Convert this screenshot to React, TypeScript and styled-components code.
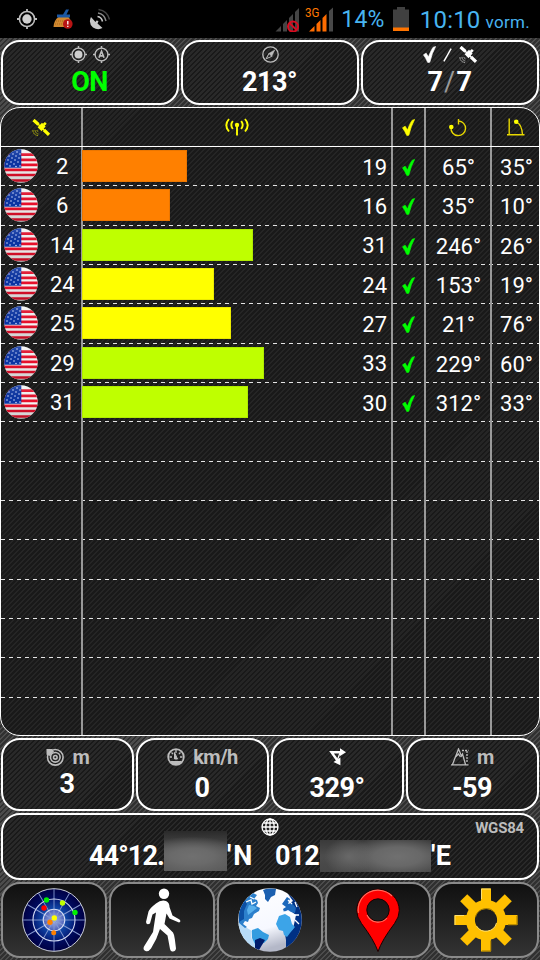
import { ReactNode } from 'react';
import styled, { createGlobalStyle } from 'styled-components';

type Satellite = {
    id: number;
    signal: number;
    azimuth: number;
    elevation: number;
}

const satellites: Satellite[] = [
    { id: 2, signal: 19, azimuth: 65, elevation: 35 },
    { id: 6, signal: 16, azimuth: 35, elevation: 10 },
    { id: 14, signal: 31, azimuth: 246, elevation: 26 },
    { id: 24, signal: 24, azimuth: 153, elevation: 19 },
    { id: 25, signal: 27, azimuth: 21, elevation: 76 },
    { id: 29, signal: 33, azimuth: 229, elevation: 60 },
    { id: 31, signal: 30, azimuth: 312, elevation: 33 },
];

const ROW_COUNT = 15;
const PX_PER_DB = 5.52;

const signalColor = (signal: number) => {
    if (signal < 20) return '#ff8000';
    if (signal < 30) return '#ffff00';
    return '#bfff00';
}

const GlobalStyle = createGlobalStyle`
    * {
        box-sizing: border-box;
    }

    body {
        margin: 0;
        background: #000;
        font-family: Roboto, "Liberation Sans", sans-serif;
        color: #fff;
    }

    svg {
        display: block;
        flex: none;
    }
`;

const Screen = styled.div`
    width: 540px;
    height: 960px;
    display: flex;
    flex-direction: column;
    overflow: hidden;
    background: repeating-linear-gradient(135deg, #303030 0 2px, #4c4c4c 2px 3.54px);
`;

const StatusBar = styled.header`
    height: 38px;
    flex: none;
    display: flex;
    align-items: center;
    padding: 1px 10px 0 17px;
    background: #000;
    color: #48b4f0;
`;

const StatusIcons = styled.div`
    display: flex;
    align-items: center;
    gap: 16px;
    margin-right: auto;
    padding-bottom: 1px;
`;

const Signals = styled.div`
    display: flex;
    gap: 5px;
    margin-bottom: 2px;
`;

const StatusText = styled.span<{ $size: number; $left: number; $top?: number; $spacing?: number }>`
    font-size: ${({ $size }) => $size}px;
    line-height: 26px;
    padding-top: ${({ $top }) => $top ?? 1}px;
    margin-left: ${({ $left }) => $left}px;
    letter-spacing: ${({ $spacing }) => $spacing ?? 0}px;
    white-space: nowrap;
`;

const Content = styled.main`
    flex: 1;
    min-height: 0;
    display: flex;
    flex-direction: column;
    gap: 2px;
    padding: 2px 0;
`;

const PanelRow = styled.div<{ $height: number }>`
    height: ${({ $height }) => $height}px;
    flex: none;
    display: flex;
    gap: 2px;
    padding: 0 1px;
`;

const Panel = styled.section<{ $top: number; $gap?: number }>`
    flex: 1 1 0;
    min-width: 0;
    display: flex;
    flex-direction: column;
    align-items: center;
    gap: ${({ $gap }) => $gap ?? 0}px;
    padding-top: ${({ $top }) => $top}px;
    border: 2px solid #fff;
    border-radius: 19px;
    background: repeating-linear-gradient(135deg, #191919 0 2px, #292929 2px 3.54px);
`;

const PanelHead = styled.div<{ $height: number; $gap?: number }>`
    height: ${({ $height }) => $height}px;
    display: flex;
    align-items: center;
    gap: ${({ $gap }) => $gap ?? 8}px;
    color: #bdbdbd;
    font-size: 20px;
    line-height: 20px;
    font-weight: 700;
    letter-spacing: -0.5px;
`;

const Value = styled.div<{ $color?: string }>`
    font-size: 27px;
    line-height: 28px;
    font-weight: 700;
    letter-spacing: -0.5px;
    padding-right: 1px;
    white-space: nowrap;
    color: ${({ $color }) => $color ?? '#fff'};
`;

const Muted = styled.span`
    color: #9a9a9a;
    font-weight: 400;
    margin: 0 2px 0 1.5px;
`;

const Table = styled.section`
    height: 629px;
    flex: none;
    overflow: hidden;
    border: 1px solid #fff;
    border-radius: 20px;
    background: repeating-linear-gradient(135deg, #191919 0 2px, #252525 2px 3.54px);
`;

const Row = styled.div`
    display: grid;
    grid-template-columns: 82px 310px 33px 66px 47px;
    height: 39.33px;
    background: repeating-linear-gradient(90deg, #e4e4e4 0 4.5px, transparent 4.5px 8px) 0 100% / 100% 1px no-repeat;
`;

const HeadRow = styled(Row)`
    height: 39px;
    border-bottom: 1px solid #fff;
    background: none;
`;

const Cell = styled.div`
    display: flex;
    align-items: center;
    justify-content: center;
    min-width: 0;
    font-size: 22px;
    line-height: 24px;
    padding: 3px 0 0 1px;
    border-right: 2px solid #999;

    &:last-child {
        border-right: none;
        padding-left: 2px;
    }
`;

const HeadCell = styled(Cell)`
    padding: 0 1px 0 0;

    &:last-child {
        padding-left: 1px;
    }
`;

const CheckCell = styled(Cell)`
    padding: 2px 1px 0 0;
`;

const SatCell = styled(Cell)`
    justify-content: flex-start;
    padding: 0 0 1px 2.5px;
`;

const SatNumber = styled.span`
    flex: 1;
    text-align: center;
    padding: 2px 0 0 6px;
`;

const SignalCell = styled(Cell)`
    justify-content: space-between;
    padding: 0 4px 0 0;
    margin-left: -1px;
`;

const SignalNumber = styled.span`
    padding-top: 2px;
`;

const Bar = styled.div`
    height: 32px;
    margin-bottom: 1.4px;
    box-shadow: inset 0 0 0 1px rgba(0, 0, 0, 0.08);
`;

const Coordinates = styled.div`
    width: 100%;
    display: flex;
    align-items: flex-start;
    padding-left: 86px;
`;

const Redacted = styled.span<{ $width: number; $height: number; $shift: number }>`
    width: ${({ $width }) => $width}px;
    height: ${({ $height }) => $height}px;
    flex: none;
    margin-top: ${({ $shift }) => $shift}px;
`;

const ShortRedacted = styled(Redacted)`
    background:
        radial-gradient(ellipse 85% 50% at 45% 64%, #707070 0, #6a6a6a 40%, transparent 100%),
        linear-gradient(#2a2a2a, #505050 50%, #585858);
`;

const LongRedacted = styled(Redacted)`
    background:
        radial-gradient(ellipse 22% 60% at 26% 52%, #686868 0, transparent 100%),
        radial-gradient(ellipse 48% 65% at 70% 52%, #707070 0, #686868 45%, transparent 100%),
        linear-gradient(#3a3a3a, #4c4c4c 50%, #464646);
`;

const CoordText = styled(Value)<{ $width: number; $spacing?: number }>`
    width: ${({ $width }) => $width}px;
    flex: none;
    margin-top: 6px;
    padding: 0;
    letter-spacing: ${({ $spacing }) => $spacing ?? -0.9}px;
`;

const CoordHead = styled.div`
    width: 100%;
    height: 18px;
    display: grid;
    grid-template-columns: 1fr 18px 1fr;
`;

const Datum = styled.span`
    grid-column: 3;
    justify-self: end;
    padding: 1px 13px 0 0;
    font-size: 15px;
    line-height: 19px;
    font-weight: 700;
    color: #bdbdbd;
    letter-spacing: -0.2px;
`;

const NavButton = styled.button`
    flex: 1 1 0;
    min-width: 0;
    display: flex;
    align-items: center;
    justify-content: center;
    padding: 0 0 1px;
    border: 2px solid #8a8a8a;
    border-radius: 19px;
    background: linear-gradient(#101010, #333);
`;

const Gps = ({ size = 17, children }: { size?: number; children?: ReactNode }) => (
    <svg width={size} height={size} viewBox="0 0 18 18" fill="none" stroke="#bdbdbd">
        <circle cx="9" cy="9" r="6.8" strokeWidth="1.4" />
        <path d="M9 0v2.5M9 15.5V18M0 9h2.5M15.5 9H18" strokeWidth="1.6" />
        {children ?? <circle cx="9" cy="9" r="4.2" fill="#cfcfcf" stroke="none" />}
    </svg>
);

const Check = ({ color }: { color: string }) => (
    <svg width="13" height="17" viewBox="0 0 13 17" fill={color} stroke={color} strokeWidth=".7" strokeLinejoin="round">
        <path d="M.5 8.8 3.2 7.2 5.4 11Q8 4.2 10 1.4L12.6.5Q9 7 6.8 16.2L4.8 16.5Q2.8 12 .5 8.8Z" />
    </svg>
);

const SatelliteIcon = ({ color }: { color: string }) => (
    <svg width="18" height="17" viewBox="0 0 18 17" fill="none" stroke={color}>
        <path d="M1.5 1 6.5 5.5M12 11l5 4.8" strokeWidth="3.2" />
        <path d="M6 5l7 7" strokeWidth="1.6" />
        <path d="M10 3.8 13.6 7.4 9.6 12.2 5.6 8.2Z" fill={color} stroke="none" />
        <path d="M11.6 6 13.8 3.8" strokeWidth="2.6" />
        <path d="M5 11.2q.2 1.4 1.6 1.8M3 11.2q.2 3 3.3 3.8M.9 11.2q.2 4.7 5 5.3" strokeWidth=".9" strokeDasharray="1.5 .7" opacity=".8" />
    </svg>
);

const AntennaIcon = () => (
    <svg width="24" height="18" viewBox="0 0 24 18" fill="none" stroke="#ffff00" strokeWidth="1.9">
        <circle cx="12" cy="7" r="2.2" fill="#ffff00" stroke="none" />
        <path d="M12 8v9.5" />
        <path d="M7.8 3q-3 4 0 8M16.200 3q3 4 0 8M4 1q-5.400 6.200 0 12.500M20 1q5.400 6.200 0 12.500" />
    </svg>
);

const AzimuthIcon = () => (
    <svg width="18" height="19" viewBox="0 0 18 19" fill="none" stroke="#e8d800" strokeWidth="1.4">
        <path d="M9.5 6.5V1M9.5 3A7.3 7.3 0 1 1 2 9.5" />
        <circle cx="2.3" cy="9" r="2.3" fill="#ffff00" stroke="none" />
    </svg>
);

const ElevationIcon = () => (
    <svg width="18" height="18" viewBox="0 0 18 18" fill="none" stroke="#e8d800" strokeWidth="1.4">
        <path d="M2.2.5v16.2M0 16.7h17.5M9.5 4q5.5 3 6 12.5" />
        <circle cx="9.2" cy="3.8" r="2.3" fill="#ffff00" stroke="none" />
    </svg>
);

const stars = [
    [5, 7], [9, 5], [13, 3], [4, 11], [8, 9], [12, 7], [16, 5], [3, 15],
    [7, 13], [11, 11], [15, 9], [6, 17], [10, 15], [14, 13], [16, 17], [12, 17.5],
];

const Flag = () => (
    <svg width="34" height="34" viewBox="0 0 34 34">
        <defs>
            <clipPath id="flag-clip"><circle cx="17" cy="17" r="16.7" /></clipPath>
            <linearGradient id="flag-shade" x2="0" y2="1">
                <stop offset="0" stopColor="#fff" stopOpacity=".15" />
                <stop offset=".5" stopColor="#000" stopOpacity="0" />
                <stop offset="1" stopColor="#000" stopOpacity=".2" />
            </linearGradient>
        </defs>
        <g clipPath="url(#flag-clip)">
            <path fill="#f8f8f8" d="M0 0h34v34H0z" />
            <path stroke="#e8102c" strokeWidth="2.7" d="M0 5.600h34M0 10.800h34M0 15.800h34M0 20.800h34M0 26h34M0 31.500h34" />
            <path fill="#0a34a4" d="M0 0h17.3v18.7H0z" />
            {stars.map(([x, y]) => <circle key={`${x}-${y}`} cx={x} cy={y} r=".8" fill="#cdd8ff" />)}
            <path fill="url(#flag-shade)" d="M0 0h34v34H0z" />
        </g>
    </svg>
);

const RadarIcon = () => (
    <svg width="64" height="64" viewBox="0 0 64 64">
        <defs>
            <radialGradient id="radar">
                <stop offset="0" stopColor="#fff" />
                <stop offset=".12" stopColor="#8c9ad8" />
                <stop offset=".33" stopColor="#4c62ba" />
                <stop offset=".36" stopColor="#1048a8" />
                <stop offset=".64" stopColor="#06207c" />
                <stop offset=".68" stopColor="#000c60" />
                <stop offset="1" stopColor="#000044" />
            </radialGradient>
        </defs>
        <circle cx="32" cy="32" r="31.3" fill="url(#radar)" stroke="#c8ccd8" strokeWidth="1" />
        <g stroke="#8498d0" strokeWidth=".9">
            {[0, 30, 60, 90, 120, 150].map(a => <path key={a} d="M32 1v62" transform={`rotate(${a} 32 32)`} />)}
        </g>
        <g fill="none" stroke="#d4dcf4" strokeWidth="1.1">
            <circle cx="32" cy="32" r="21" />
            <circle cx="32" cy="32" r="10.8" />
        </g>
        <circle cx="24.5" cy="12" r="2.7" fill="#00f000" />
        <circle cx="40.5" cy="15" r="2.7" fill="#c0ff00" />
        <circle cx="22" cy="20" r="2.7" fill="#f00" />
        <circle cx="53" cy="24.5" r="2.7" fill="#00f000" />
        <circle cx="32.3" cy="30" r="2.7" fill="#ff0" />
        <circle cx="28" cy="34.3" r="2.7" fill="#ff8000" />
        <circle cx="31.7" cy="44.8" r="2.5" fill="#ff8000" />
    </svg>
);

const WalkIcon = () => (
    <svg width="64" height="64" viewBox="0 0 64 64" fill="#fff">
        <circle cx="34" cy="5.8" r="5.2" />
        <path d="M26 15.5Q31 11.5 36 13Q39.5 14.5 39.5 19L42.5 27.5 49.5 31.5Q51.5 33.5 49 34.5L39.5 30.5 36.5 25.5 34.5 36 43 44.5Q44.5 47 44.8 51L46 60.5Q45.5 64 42 63.5Q40.5 63 40 61L37.5 47.5 30 41Q27 51 21 60.5Q18.5 64 15.5 63Q12.5 61.5 14 58.5L23 44 26 24.5 22.5 26.5 20 35.5Q16.5 37.5 16 34L18.5 23.5Q19.5 20.5 26 15.5Z" />
    </svg>
);

const EarthIcon = () => (
    <svg width="64" height="64" viewBox="0 0 64 64">
        <defs>
            <clipPath id="earth-clip"><circle cx="32" cy="32" r="31.8" /></clipPath>
            <linearGradient id="earth-sea" x2=".3" y2="1">
                <stop offset="0" stopColor="#fff" />
                <stop offset=".7" stopColor="#f6f8ff" />
                <stop offset="1" stopColor="#b4b8c8" />
            </linearGradient>
        </defs>
        <g clipPath="url(#earth-clip)">
            <path fill="url(#earth-sea)" d="M0 0h64v64H0z" />
            <path fill="#b8dcf8" d="M0 35l4 1 5 4 5 3-1 7 5 6 2 6-10-4Q0 48 0 35Z" />
            {/* north america and greenland */}
            <path fill="#2c80cc" d="M1 35Q-1 18 10 9l5-4 4 2-3 4 3 1 1 3-2 3 4 2-1 3-5 3-2 4-3 1-1 3-3-1-2 3 4 3-2 1Z" />
            <path fill="#0c50a4" d="M1 34Q0 20 7 12l2 4-3 7 0 8Z" />
            <path fill="#58b0ec" d="M11 17l5 1 3 2-5 4-4 3-1-5Z" />
            <path fill="#1c60b0" d="M25 2Q31-1 38 1l-1 6-4 2-3 5-3-3 0-4Z" />
            {/* south america */}
            <path fill="#349ce0" d="M14 42l6-2 5 4 6 3-1 4-4 4-9 1-3-6Z" />
            <path fill="#001c6c" d="M17 52l5-2 5 2-3 5-3 5-4-1Z" />
            {/* europe, asia and africa */}
            <path fill="#003084" d="M50 6l6 3q8 9 8 20v16q-4 12-14 17l-2 0 0-10-1-6 8-5 3-14-4-3-3-3 1-6 3-2Z" />
            <path fill="#1c68bc" d="M44 16l5-7 3 2-2 5 4-1 4 5-1 5-4-1-3-2-4 2-1-3 3-2Z" />
            <path fill="#3ca4e8" d="M41 28l6-2 5 3 2 7 3 3-5 6-3 4-3-2-1-4-4-1-3-6Z" />
            <path fill="none" stroke="#fff" strokeWidth="1.3" d="M8 14l5-2 1 4 4-2M12 9l4 2M50 12l4 4M46 24l6 1 3 2 6 0M57 14l2 5M57 32l4 4" />
        </g>
    </svg>
);

const PinIcon = () => (
    <svg width="64" height="64" viewBox="0 0 64 64">
        <path fill="#f00" stroke="#1a0000" strokeWidth="1" fillRule="evenodd" d="M32 63.5Q28 52 15.5 35.5Q10.7 29 10.7 22.5A21.3 21.3 0 0 1 53.3 22.5Q53.3 29 48.5 35.5Q36 52 32 63.5ZM32 10.8a11.2 11.2 0 1 0 0 22.4a11.2 11.2 0 1 0 0-22.4Z" />
        <path fill="none" stroke="#ff7060" strokeWidth="1.1" d="M12.4 25A19.8 19.8 0 0 1 46 8M21 27a12 12 0 0 0 20 3" />
    </svg>
);

const GearIcon = () => (
    <svg width="64" height="64" viewBox="0 0 64 64">
        <g fill="#ffc000">
            {[0, 45, 90, 135, 180, 225, 270, 315].map(a => (
                <path key={a} d="M27 .5h10v14H27z" transform={`rotate(${a} 32 32)`} />
            ))}
        </g>
        <circle cx="32" cy="32" r="15.6" fill="none" stroke="#ffc000" strokeWidth="9" />
        <path fill="none" stroke="#ffe070" strokeWidth="1" d="M27.5 11V1h9M1 37V27.5h9M22.5 38a11 11 0 0 0 20-3" />
        <path fill="none" stroke="#a07800" strokeWidth="1" d="M36.8 52.5v10.5h-9M54 36.8h9V28M21.5 29a11 11 0 0 1 19.5-4" />
    </svg>
);

const App = () => (
    <>
        <GlobalStyle />
        <Screen>
            <StatusBar>
                <StatusIcons>
                    <Gps size={20} />
                    <svg width="20" height="20" viewBox="0 0 20 20">
                        <path fill="#d08830" d="M.5 18q.5-7 5-10h10l2 3v7Z" />
                        <path fill="#1c58a4" d="M4 5.5h6L13 .5h3L13.5 5.5H17v3H4Z" />
                        <path stroke="#a86818" strokeDasharray="1 1" d="M3 12h12M2 15h12" />
                        <circle cx="14.8" cy="15" r="4.8" fill="#b81414" />
                        <path stroke="#fff" strokeWidth="1.3" d="M14.8 12v3.6M14.8 16.8v1.3" />
                    </svg>
                    <svg width="22" height="22" viewBox="0 0 22 22" fill="none">
                        <path fill="#c8c8c8" d="M2 9Q-1 15 4 19.5Q9 22.5 13.5 20L8.5 15.5 9.5 13 7.5 12.5 6.5 14Z" />
                        <path stroke="#c8c8c8" strokeWidth="1.5" d="M8.5 8.5q4 .5 5 5" />
                        <path stroke="#888" strokeWidth="1.5" d="M9 5q6.5 1 8 8" />
                        <path stroke="#444" strokeWidth="1.5" d="M9.5 1.5q9 1.5 11 10" />
                    </svg>
                </StatusIcons>
                <Signals>
                    <svg width="25" height="26" viewBox="0 0 25 26">
                        <path fill="#444" d="M.5 25.5 6 20v5.5ZM8 18l4-4v11.5H8ZM14 12l4-4v17.5h-4ZM20 6l4-4v23.5h-4Z" />
                        <g fill="none" stroke="#d80c20" strokeWidth="2">
                            <circle cx="18" cy="20.5" r="5" />
                            <path d="m14.5 17 7 7" />
                        </g>
                    </svg>
                    <svg width="29" height="26" viewBox="0 0 29 26">
                        <text x="0" y="11" fill="#ff7800" fontSize="13" textLength="14.5" lengthAdjust="spacingAndGlyphs">3G</text>
                        <path fill="#ff6c00" d="M4 25.5 9.5 20v5.5ZM11.5 18l4-4v11.5h-4ZM17.5 12l4-4v17.5h-4Z" />
                        <path fill="#484848" d="M24 5l4-3.5v24h-4Z" />
                    </svg>
                </Signals>
                <StatusText $size={23} $left={7} $spacing={0.3}>14%</StatusText>
                <svg width="16" height="24" viewBox="0 0 16 24" style={{ marginLeft: 8, marginBottom: 2 }}>
                    <path fill="#404040" d="M4 0h8v2.5h4V24H0V2.5h4Z" />
                    <path fill="#ff7400" d="M0 20.5h16V24H0z" />
                </svg>
                <StatusText $size={24} $left={11} $spacing={0.2}>10:10</StatusText>
                <StatusText $size={17} $left={5} $top={5} $spacing={0.3}>vorm.</StatusText>
            </StatusBar>
            <Content>
                <PanelRow $height={65}>
                    <Panel $top={4} $gap={5}>
                        <PanelHead $height={17} $gap={6}>
                            <Gps />
                            <Gps><path d="m6.3 12.5 2.7-7 2.7 7M7.2 10.5h3.6" strokeWidth="1.7" /></Gps>
                        </PanelHead>
                        <Value $color="#00ff00">ON</Value>
                    </Panel>
                    <Panel $top={4} $gap={5}>
                        <PanelHead $height={17}>
                            <svg width="17" height="17" viewBox="0 0 17 17" fill="none" stroke="#bdbdbd">
                                <circle cx="8.5" cy="8.5" r="7.7" strokeWidth="1.3" />
                                <path d="M12.8 4 9.8 10.3 7 7.3Z" fill="#bdbdbd" strokeWidth=".5" />
                                <path d="M4.2 12.8 7 7.3l2.8 3Z" />
                            </svg>
                        </PanelHead>
                        <Value>213°</Value>
                    </Panel>
                    <Panel $top={4} $gap={5}>
                        <PanelHead $height={17} $gap={7}>
                            <Check color="#fff" />
                            <svg width="9" height="16" viewBox="0 0 10 16" stroke="#fff" strokeWidth="1.6"><path d="M1 15 9 1" /></svg>
                            <SatelliteIcon color="#fff" />
                        </PanelHead>
                        <Value>7<Muted>/</Muted>7</Value>
                    </Panel>
                </PanelRow>

                <Table>
                    <HeadRow>
                        <HeadCell><SatelliteIcon color="#ffff00" /></HeadCell>
                        <HeadCell><AntennaIcon /></HeadCell>
                        <HeadCell><Check color="#ffff00" /></HeadCell>
                        <HeadCell><AzimuthIcon /></HeadCell>
                        <HeadCell><ElevationIcon /></HeadCell>
                    </HeadRow>
                    {Array.from({ length: ROW_COUNT }, (_, index) => {
                        const sat = satellites[index];
                        if (!sat) return <Row key={index}><Cell /><Cell /><Cell /><Cell /><Cell /></Row>;
                        return (
                            <Row key={index}>
                                <SatCell>
                                    <Flag />
                                    <SatNumber>{sat.id}</SatNumber>
                                </SatCell>
                                <SignalCell>
                                    <Bar style={{ width: sat.signal * PX_PER_DB, background: signalColor(sat.signal) }} />
                                    <SignalNumber>{sat.signal}</SignalNumber>
                                </SignalCell>
                                <CheckCell><Check color="#00ff00" /></CheckCell>
                                <Cell>{sat.azimuth}°</Cell>
                                <Cell>{sat.elevation}°</Cell>
                            </Row>
                        );
                    })}
                </Table>

                <PanelRow $height={73}>
                    <Panel $top={7} $gap={3}>
                        <PanelHead $height={20} $gap={9}>
                            <svg width="18" height="18" viewBox="0 0 18 18" fill="none" stroke="#bdbdbd" strokeWidth="1.6">
                                <circle cx="9.3" cy="9.3" r="7.8" />
                                <circle cx="9.3" cy="9.3" r="4.8" />
                                <circle cx="9.3" cy="9.3" r="1.8" />
                                <path d="M.5 1h5.5l2 2.5-4.5 4.5-3-1.5Z" fill="#bdbdbd" stroke="none" />
                            </svg>
                            m
                        </PanelHead>
                        <Value>3</Value>
                    </Panel>
                    <Panel $top={7} $gap={7}>
                        <PanelHead $height={20}>
                            <svg width="18" height="18" viewBox="0 0 18 18" fill="none" stroke="#bdbdbd" strokeWidth="1.8">
                                <circle cx="9" cy="9" r="7.8" />
                                <path d="M3 13h12l-2 3H5Z" fill="#bdbdbd" stroke="none" />
                                <path d="M9 2v3M2.5 9H5M13 9h2.5M4.5 4.5 6 6M13.5 4.5 12 6" strokeWidth="1.3" />
                                <path d="m7.5 4.5 3 6.5h-3Z" fill="#bdbdbd" strokeWidth="1" />
                            </svg>
                            km/h
                        </PanelHead>
                        <Value>0</Value>
                    </Panel>
                    <Panel $top={7} $gap={7}>
                        <PanelHead $height={20}>
                            <svg width="17" height="18" viewBox="0 0 17 18" fill="none" stroke="#fff" strokeWidth="2.4">
                                <path d="M12 4.2H2.5l6.5 9" />
                                <path d="M8.5 11.5 11 5" strokeWidth="1.3" />
                                <path d="M11 .2 17 4.2l-6 3.8ZM11.4 9.5v7.8L4.5 14Z" fill="#fff" stroke="none" />
                            </svg>
                        </PanelHead>
                        <Value>329°</Value>
                    </Panel>
                    <Panel $top={7} $gap={7}>
                        <PanelHead $height={20}>
                            <svg width="18" height="18" viewBox="0 0 18 18" fill="none" stroke="#bdbdbd" strokeWidth="1.3">
                                <path d="M0 16.8h17.5M1.5 16.5 7.5 1l3 7 1-2 3 10.5M4.5 9 7.5 6l2 3" />
                                <path d="M11 2.5h6.5M16 3v11" strokeDasharray="2 1" />
                            </svg>
                            m
                        </PanelHead>
                        <Value>-59</Value>
                    </Panel>
                </PanelRow>

                <PanelRow $height={67}>
                    <Panel $top={3}>
                        <CoordHead>
                            <span />
                            <svg width="18" height="18" viewBox="0 0 18 18" fill="none" stroke="#fff" strokeWidth="1.3">
                                <circle cx="9" cy="9" r="8" />
                                <ellipse cx="9" cy="9" rx="4.2" ry="8" />
                                <path d="M9 1v16M1 9h16M2.5 5h13M2.5 13h13" />
                            </svg>
                            <Datum>WGS84</Datum>
                        </CoordHead>
                        <Coordinates>
                            <CoordText $width={75}>44°12.</CoordText>
                            <ShortRedacted $width={63} $height={40} $shift={-5} />
                            <CoordText $width={48} $spacing={2}>'N</CoordText>
                            <CoordText $width={45}>012</CoordText>
                            <LongRedacted $width={111} $height={32} $shift={4} />
                            <CoordText $width={25} $spacing={0.5}>'E</CoordText>
                        </Coordinates>
                    </Panel>
                </PanelRow>

                <PanelRow $height={76}>
                    <NavButton><RadarIcon /></NavButton>
                    <NavButton><WalkIcon /></NavButton>
                    <NavButton><EarthIcon /></NavButton>
                    <NavButton><PinIcon /></NavButton>
                    <NavButton><GearIcon /></NavButton>
                </PanelRow>
            </Content>
        </Screen>
    </>
);

export default App;
